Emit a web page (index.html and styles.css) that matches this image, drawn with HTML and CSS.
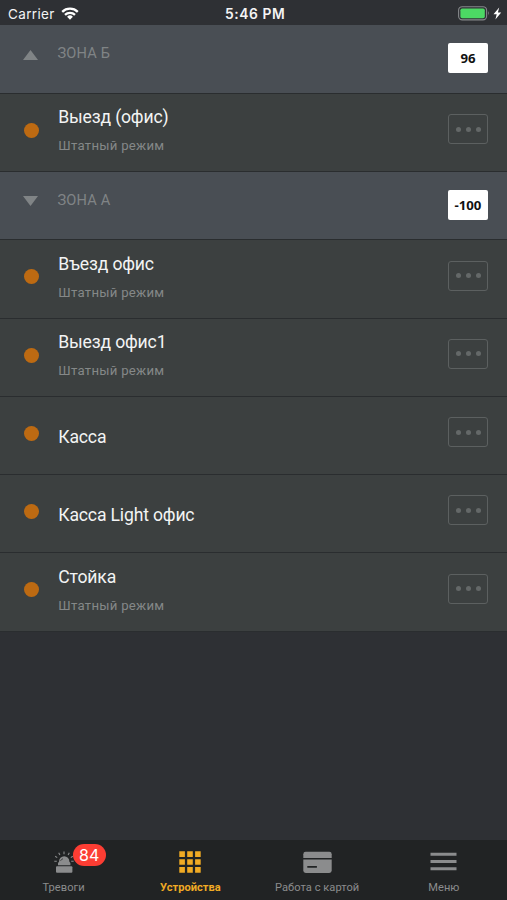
FILE: index.html
```html
<!DOCTYPE html>
<html lang="ru">
<head>
<meta charset="utf-8">
<title>Устройства</title>
<link rel="stylesheet" href="styles.css">
</head>
<body>
<div class="app">
  <header class="status">
    <div class="status-left"><span class="carrier">Carrier</span>
      <svg class="wifi" width="18" height="13" viewBox="0 0 18 13"><g fill="none" stroke="#fff" stroke-width="2.3"><path d="M1.2 4.8a11.2 11.2 0 0 1 15.6 0"/><path d="M4 7.9a7.2 7.2 0 0 1 10 0"/></g><path fill="#fff" d="M6.1 9.7a4.2 4.2 0 0 1 5.8 0L9 12.7z"/></svg>
    </div>
    <div class="time">5:46 PM</div>
    <div class="status-right">
      <svg width="44" height="15" viewBox="0 0 44 15"><rect x=".6" y=".7" width="28" height="13.2" rx="3.6" fill="none" stroke="#85878a" stroke-width="1.1"/><rect x="2.4" y="2.4" width="24.4" height="9.8" rx="1.8" fill="#4cd964"/><path d="M30 5.1q1.8 2.2 0 4.4z" fill="#85878a"/><path d="M41.2 1.5 35.5 8.2h3.2l-1.3 5.3 5.8-7h-3.3z" fill="#fff"/></svg>
    </div>
  </header>
  <main class="list">
    <section class="zone"><svg class="arrow" width="15" height="10" viewBox="0 0 15 10"><path d="M7.5 0 15 10H0z"/></svg><h2>ЗОНА Б</h2><span class="count">96</span></section>
    <article class="device"><i class="dot"></i><div class="info"><h3>Выезд (офис)</h3><p>Штатный режим</p></div><button class="more"><i></i><i></i><i></i></button></article>
    <section class="zone"><svg class="arrow" width="15" height="10" viewBox="0 0 15 10"><path d="M0 0h15L7.5 10z"/></svg><h2>ЗОНА А</h2><span class="count">-100</span></section>
    <article class="device"><i class="dot"></i><div class="info"><h3>Въезд офис</h3><p>Штатный режим</p></div><button class="more"><i></i><i></i><i></i></button></article>
    <article class="device"><i class="dot"></i><div class="info"><h3>Выезд офис1</h3><p>Штатный режим</p></div><button class="more"><i></i><i></i><i></i></button></article>
    <article class="device"><i class="dot"></i><div class="info single"><h3>Касса</h3></div><button class="more"><i></i><i></i><i></i></button></article>
    <article class="device"><i class="dot"></i><div class="info single"><h3>Касса Light офис</h3></div><button class="more"><i></i><i></i><i></i></button></article>
    <article class="device"><i class="dot"></i><div class="info"><h3>Стойка</h3><p>Штатный режим</p></div><button class="more"><i></i><i></i><i></i></button></article>
  </main>
  <nav class="tabs">
    <a class="tab"><span class="icon"><svg width="20" height="22" viewBox="0 0 20 22"><g fill="#8b8c8d"><rect x="2" y="15.2" width="16.4" height="6.6" rx="1"/><path d="M4 14.2V12l1-1.2a5.2 5.6 0 0 1 10.4 0l1 1.2v2.2z"/></g><path d="M6.4 9.6 9 7.6" stroke="#212324" stroke-width=".7" fill="none"/><g stroke="#8b8c8d" stroke-width="1.1"><path d="M10 .4v2.8M4.7 1.8l1.2 2.2M15.3 1.8l-1.2 2.2M1.2 5.2l2 1.4M18.8 5.2l-2 1.4M.3 10.2h2.5M17.2 10.2h2.5"/></g></svg><b class="badge">84</b></span><span class="label">Тревоги</span></a>
    <a class="tab active"><span class="icon"><svg width="22" height="22" viewBox="0 0 22 22" fill="#f0aa24"><path d="M.3.3h5.6v5.6H.3zM8.2.3h5.6v5.6H8.2zM16.1.3h5.6v5.6h-5.6zM.3 8.2h5.6v5.6H.3zM8.2 8.2h5.6v5.6H8.2zM16.1 8.2h5.6v5.6h-5.6zM.3 16.1h5.6v5.6H.3zM8.2 16.1h5.6v5.6H8.2zM16.1 16.1h5.6v5.6h-5.6z"/></svg></span><span class="label">Устройства</span></a>
    <a class="tab"><span class="icon"><svg width="29" height="22" viewBox="0 0 29 22"><rect x=".3" y=".8" width="28.4" height="21.2" rx="2.4" fill="#8b8c8d"/><path d="M0 7.8h29M4.3 15.9h9.6" stroke="#212324" stroke-width="1.6"/></svg></span><span class="label">Работа с картой</span></a>
    <a class="tab"><span class="icon"><svg width="27" height="22" viewBox="0 0 27 22"><path d="M.5 3.3h26M.5 10.5h26M.5 17.7h26" stroke="#8b8c8d" stroke-width="3"/></svg></span><span class="label">Меню</span></a>
  </nav>
</div>
</body>
</html>
```
FILE: styles.css
```css
* { box-sizing: border-box; }
body { margin: 0; background: #2e3034; font-family: Roboto, sans-serif; }
h2, h3, p { margin: 0; font-weight: 400; white-space: nowrap; }
.app { width: 507px; height: 900px; display: flex; flex-direction: column; overflow: hidden; }
.status { height: 25.4px; display: grid; grid-template-columns: 1fr auto 1fr; align-items: center; padding: 2px 5.5px 0 8px; color: #f4f4f4; font-family: Inter, sans-serif; font-size: 13.5px; line-height: 22px; }
.status-left { display: flex; align-items: center; gap: 6.5px; }
.wifi { margin-top: -1px; }
.carrier { letter-spacing: .35px; }
.time { font-weight: 600; font-size: 13.8px; letter-spacing: .6px; margin-left: 1px; }
.status-right { display: flex; justify-content: flex-end; }
.list { flex: 1; }
.zone, .device { display: flex; align-items: flex-start; border-bottom: 1px solid #2a2d2f; padding-right: 19px; }
.zone { height: 68.4px; background: #494e54; }
.device { height: 78.25px; background: #3c4040; }
.arrow { margin: 24.4px 19.5px 0 23px; fill: #808486; flex: none; }
.zone h2 { margin-top: 18px; line-height: 20px; font-size: 14.6px; letter-spacing: .15px; color: #808486; }
.count { margin: 18px 0 0 auto; width: 40px; height: 30px; border-radius: 2px; background: #fff; color: #111; font: 700 13.2px/31px "Noto Sans", sans-serif; text-align: center; }
.dot { width: 15px; height: 15px; border-radius: 50%; background: #bd6a12; margin: 29px 19.3px 0 24px; flex: none; }
.info { padding-top: 12.7px; }
.info.single { padding-top: 28.6px; }
.info h3 { font-size: 17.6px; line-height: 22px; letter-spacing: -.17px; color: #f3f4f4; }
.info p { margin-top: 8.4px; font-size: 13.2px; line-height: 18px; letter-spacing: .26px; color: #858888; }
.more { margin: 20.3px 0 0 auto; padding: 0; width: 40px; height: 30px; border: 1.5px solid #5c6060; border-radius: 3px; background: none; display: flex; align-items: center; justify-content: center; gap: 5px; }
.more i { width: 5px; height: 5px; border-radius: 50%; background: #646868; }
.tabs { height: 60px; display: grid; grid-template-columns: repeat(4, 1fr); background: #212324; color: #8b8c8d; }
.tab { display: flex; flex-direction: column; align-items: center; padding: 11px 0 0 .5px; }
.icon { position: relative; height: 22px; display: flex; }
.label { margin-top: 6.5px; font-size: 11.1px; line-height: 16px; letter-spacing: .05px; white-space: nowrap; }
.active .label { color: #f0aa24; font-weight: 700; letter-spacing: 0; }
.badge { position: absolute; left: 19px; top: -7px; width: 33px; height: 22px; border-radius: 11px; background: #fc3d33; color: #fff; font: 400 16px/22px Inter, sans-serif; text-align: center; }
```
